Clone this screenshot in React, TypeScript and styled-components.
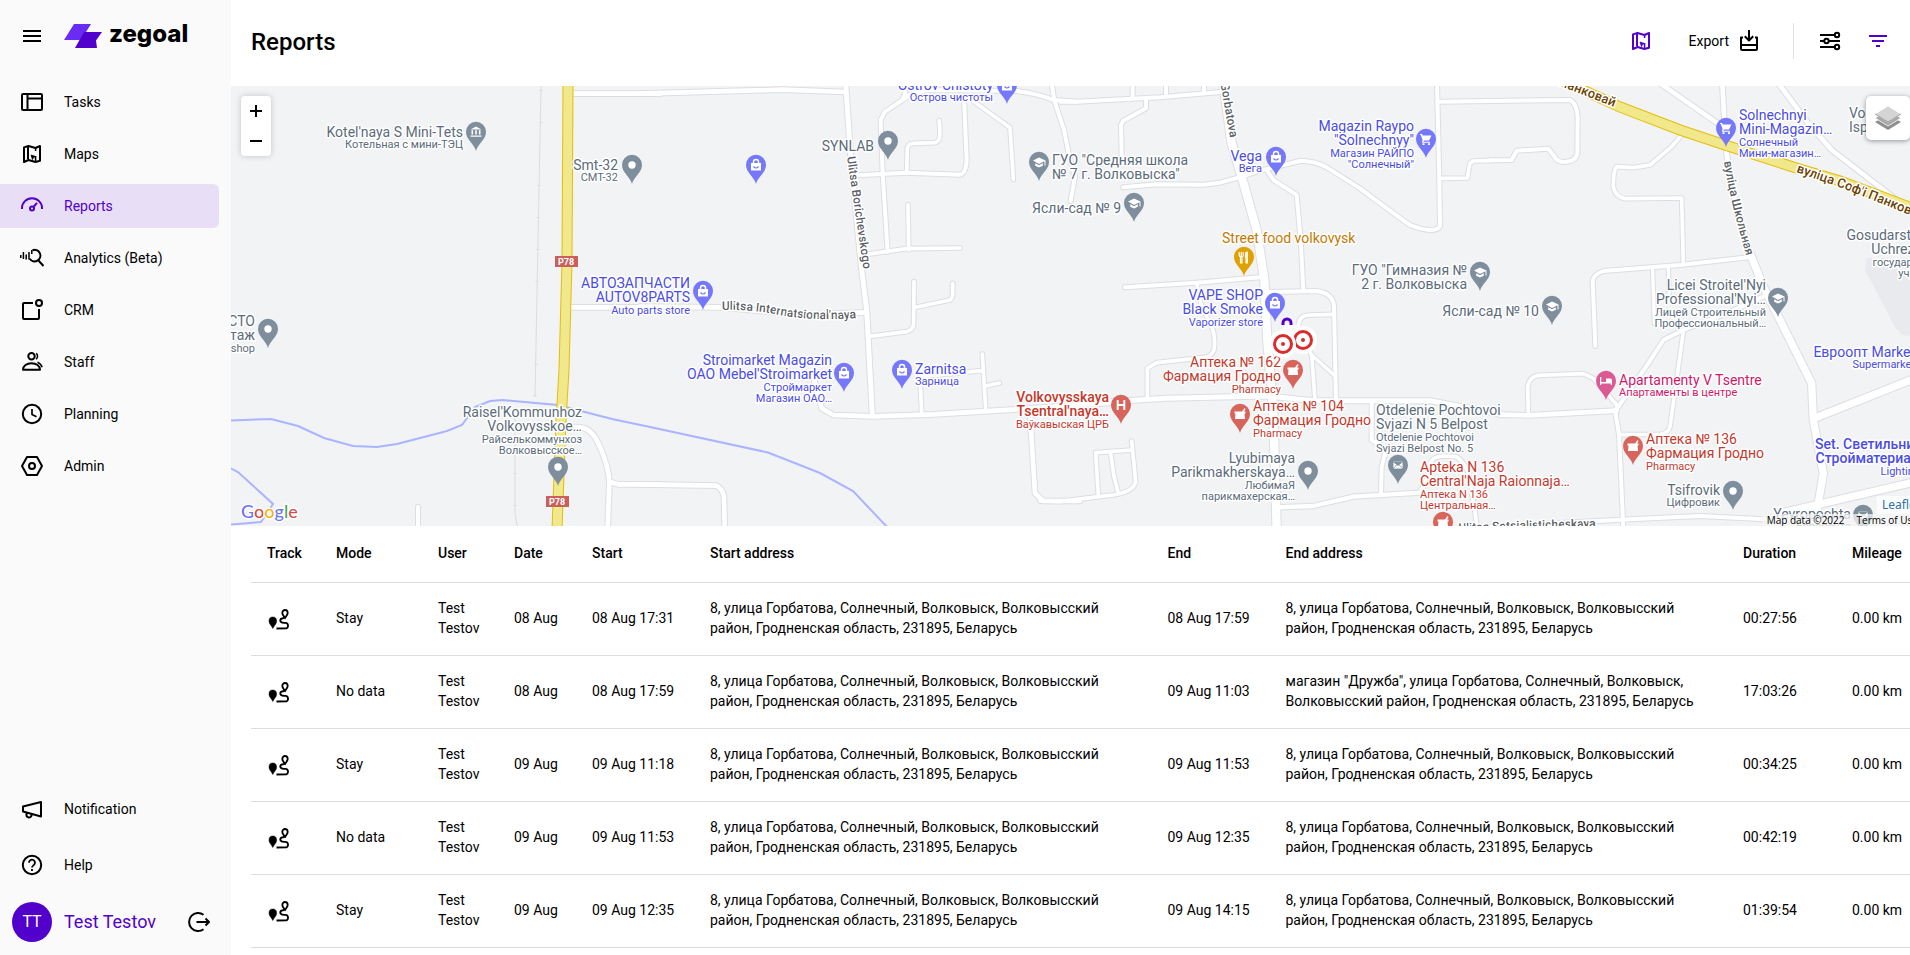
import React from 'react';
import styled, { createGlobalStyle, css } from 'styled-components';

const PURPLE = '#5200cc';

const GlobalStyle = createGlobalStyle`
  *, *::before, *::after { box-sizing: border-box; }
  body {
    margin: 0;
    background: #fff;
    color: #000;
    font-family: Roboto, 'Liberation Sans', sans-serif;
    font-size: 14px;
    line-height: 20px;
  }
  button { display: block; font: inherit; color: inherit; background: none; border: 0; padding: 0; cursor: pointer; }
  a { color: inherit; text-decoration: none; }
`;

/* ---------- Icons ---------- */

const IconSvg = styled.svg`
  display: block;
  flex: none;
  width: 24px;
  height: 24px;
  fill: none;
  stroke: currentColor;
  stroke-width: 2;
  stroke-linejoin: round;
`;

type IconProps = { children: React.ReactNode };
const Icon = ({ children }: IconProps) => (
  <IconSvg viewBox="0 0 24 24" aria-hidden="true">{children}</IconSvg>
);

const MenuIcon = () => <Icon><path d="M3 7h18M3 12h18M3 17h18" /></Icon>;
const TasksIcon = () => (
  <Icon><rect x="2" y="4" width="20" height="16" rx="1" /><path d="M7.5 4v16M7.5 8.5H22" /></Icon>
);
const MapIcon = () => (
  <Icon>
    <path d="M4 5.400 8.500 4l7 2L20 4v14.800L15.500 20l-7-2L4 20z" />
    <path d="M8 4v13" />
    <path d="M15.600 14v6M15.600 6v3" strokeWidth="1.500" />
    <path d="M11 13l4.500 1.500-2 1-1 2z" fill="currentColor" strokeWidth=".8" />
  </Icon>
);
const GaugeIcon = () => (
  <Icon>
    <path d="M2 15v-1a10 9.700 0 0 1 20 0v1" />
    <circle cx="12" cy="14.500" r="2" />
    <path d="M13.500 13 17 8.800" />
  </Icon>
);
const AnalyticsIcon = () => (
  <Icon>
    <path d="M.8 9v3M3.400 6v7M6.200 8.500v5M9 6v7.500M11.800 4v4" strokeWidth="1.500" />
    <path d="M12.500 4.200a5.800 5.800 0 1 1-2.800 8.600M18 14l5.500 6" />
  </Icon>
);
const CrmIcon = () => (
  <Icon><path d="M13 5H4a1 1 0 0 0-1 1v14a1 1 0 0 0 1 1h14a1 1 0 0 0 1-1v-9" /><circle cx="19" cy="5" r="3" /></Icon>
);
const StaffIcon = () => (
  <Icon>
    <circle cx="11.500" cy="6.300" r="3.200" />
    <path d="M3 19.800c0-4 3.800-6.600 8.500-6.600s8.500 2.600 8.500 6.600z" />
    <path d="M16.300 3.200q2.600 3-.2 6M17.500 12.200q3.600 1.600 4.600 5" strokeWidth="1.500" />
  </Icon>
);
const ClockIcon = () => <Icon><circle cx="12" cy="12" r="9.200" /><path d="M12 7v5.500l4.500 2.300" strokeWidth="1.700" /></Icon>;
const AdminIcon = () => <Icon><path d="M7 3h10l5 9-5 9H7l-5-9z" /><circle cx="12" cy="12" r="3" /></Icon>;
const MegaphoneIcon = () => (
  <Icon><path d="M3 9.500 21 5v14.500L3 14.500zM6.500 16v1.500a2.500 2.500 0 0 0 5 .8v-1" /></Icon>
);
const HelpIcon = () => (
  <Icon>
    <circle cx="12" cy="12" r="9.200" />
    <path d="M9 9.800a3 3 0 1 1 4.700 2.300c-1 .8-1.700 1.200-1.700 2.400M12 16v2" strokeWidth="1.800" />
  </Icon>
);
const LogoutIcon = () => (
  <Icon><path d="M16.500 4.800a9 9 0 1 0 0 14.400M9.500 12H22M18.500 8.500 22 12l-3.500 3.500" /></Icon>
);
const ExportIcon = () => (
  <Icon>
    <path d="M12 1v10M7.800 7.300 12 11.500l4.200-4.200" />
    <path d="M6 8.500H4V20a1 1 0 0 0 1 1h14a1 1 0 0 0 1-1V8.500h-2M4 16h16" />
  </Icon>
);
const SlidersIcon = () => (
  <Icon>
    <path d="M2 6h15M2 12h4M11 12h11M2 18h15" />
    <circle cx="19" cy="6" r="2.200" /><circle cx="8.500" cy="12" r="2.200" /><circle cx="19" cy="18" r="2.200" />
  </Icon>
);
const FilterIcon = () => <Icon><path d="M3 7h18M6 12h12M10 17h4" /></Icon>;
const TrackIcon = () => (
  <Icon>
    <path d="M5.800 22.500C4.500 19.500 2 18 2 15.200a3.800 4.200 0 0 1 7.600 0c0 2.800-2.500 4.300-3.800 7.300z" fill="currentColor" strokeWidth=".5" />
    <path d="M18 12.200c-.7-1.700-2.700-3.500-2.700-5.300a2.700 2.900 0 0 1 5.400 0c0 1.800-2 3.600-2.700 5.300zM17 12c-5 .5-5 4.600 0 4.800h1.500c3 0 3.300 4.500 1 5.500l-10 .2" strokeWidth="1.800" />
  </Icon>
);

/* ---------- Sidebar ---------- */

const Shell = styled.div`
  display: flex;
  height: 100vh;
  overflow: hidden;
`;

const Sidebar = styled.aside`
  display: flex;
  flex-direction: column;
  flex: none;
  width: 231px;
  background: #fafafa;
`;

const Brand = styled.div`
  display: flex;
  align-items: center;
  gap: 20px;
  height: 80px;
  padding: 0 20px 8px;
`;

const Logo = styled.a`
  display: flex;
  align-items: center;
  gap: 7px;
  font: 800 24px/32px Inter, sans-serif;
`;

const LogoMark = styled.svg`
  display: block;
  width: 38px;
  height: 24px;
`;

const LogoText = styled.span`
  padding-bottom: 4px;
`;

const NavList = styled.nav`
  display: flex;
  flex-direction: column;
  gap: 8px;
`;

const BottomNav = styled(NavList)`
  gap: 12px;
  margin: auto 0 2px;
`;

const NavItem = styled.a<{ $active?: boolean }>`
  display: flex;
  align-items: center;
  gap: 20px;
  height: 44px;
  margin-right: 12px;
  padding-left: 20px;
  border-radius: 0 6px 6px 0;
  ${({ $active }) => $active && css`
    color: ${PURPLE};
    background: #e8dff6;
  `}
`;

const UserBar = styled.div`
  display: flex;
  align-items: center;
  height: 66px;
  padding: 0 20px 0 12px;
`;

const Avatar = styled.span`
  display: grid;
  place-items: center;
  width: 40px;
  height: 40px;
  margin-right: 12px;
  border-radius: 50%;
  background: ${PURPLE};
  color: #fff;
  font-size: 16px;
`;

const UserName = styled.a`
  flex: 1;
  color: ${PURPLE};
  font-size: 18px;
`;

/* ---------- Header ---------- */

const Main = styled.main`
  flex: none;
  width: calc(100% - 221px);
  min-width: 0;
`;

const Header = styled.header`
  display: flex;
  align-items: center;
  height: 86px;
  padding: 0 30px 4px 20px;
`;

const Title = styled.h1`
  flex: 1;
  margin: 0;
  padding-top: 2px;
  font-size: 24px;
  font-weight: 500;
  line-height: 32px;
`;

const Tool = styled.button<{ $accent?: boolean }>`
  display: flex;
  align-items: center;
  gap: 8px;
  color: ${({ $accent }) => ($accent ? PURPLE : '#000')};
`;

const ExportTool = styled(Tool)`
  padding-left: 4px;
`;

const Tools = styled.div`
  display: flex;
  align-items: center;
  gap: 32px;
`;

const ToolPair = styled.div`
  display: flex;
  gap: 24px;
  padding: 6px 0 6px 24px;
  border-left: 1px solid #e0e0e0;
`;

/* ---------- Map ---------- */

const MapPanel = styled.section`
  position: relative;
  height: 440px;
  overflow: hidden;
  background: #f1f3f4;
`;

const MapCanvas = styled.svg`
  display: block;
  width: 100%;
  height: 100%;
  font-family: Roboto, sans-serif;
`;

const MainText = styled.text<{ $bold?: boolean }>`
  font-size: 14px;
  font-weight: ${({ $bold }) => ($bold ? 500 : 400)};
  paint-order: stroke;
  stroke: #fff;
  stroke-width: 3px;
  stroke-linejoin: round;
`;

const SubText = styled(MainText)`
  font-size: 11px;
  font-weight: 400;
`;

const RoadText = styled(MainText)<{ $highway?: boolean }>`
  font-size: ${({ $highway }) => ($highway ? '13px' : '12px')};
  fill: ${({ $highway }) => ($highway ? '#6b4100' : '#5b6066')};
`;

const ShieldText = styled.text`
  font-size: 9px;
  font-weight: 700;
  fill: #fff;
`;

const GoogleText = styled(MainText)`
  font-family: Lato, sans-serif;
  font-size: 18px;
`;

const ZoomControl = styled.div`
  position: absolute;
  top: 10px;
  left: 10px;
  display: flex;
  flex-direction: column;
  width: 30px;
  border-radius: 4px;
  background: #fff;
  box-shadow: 0 0 6px rgba(0, 0, 0, 0.2);
`;

const ZoomButton = styled.button`
  display: grid;
  place-items: center;
  height: 30px;
`;

const LayersButton = styled.button`
  position: absolute;
  top: 10px;
  right: 10px;
  display: grid;
  place-items: center;
  width: 44px;
  height: 44px;
  border-radius: 5px;
  background: #fff;
  box-shadow: 0 1px 5px rgba(0, 0, 0, 0.4);
`;

const Credits = styled.div`
  position: absolute;
  right: 0;
  bottom: 0;
  display: flex;
  flex-direction: column;
  align-items: flex-end;
  font: 10px/12px 'Open Sans', sans-serif;
`;

const Attribution = styled.a`
  padding-left: 5px;
  background: rgba(255, 255, 255, 0.7);
  color: #2f6fa8;
  font: 12px/18px 'Noto Sans', sans-serif;
`;

const MapTerms = styled.div`
  display: flex;
  gap: 12px;
  padding: 0 2px 0 5px;
  background: rgba(245, 245, 245, 0.75);
`;

/* Street geometry, cut in tiles: each has its origin in map units and holds
   paths at three times that scale, as [stroke width, path]. */
type Road = [number, string];
type Tile = { x: number; y: number; roads: Road[] };

const TILES: Tile[] = [
  {
    x: 230, y: 80, roads: [
      [14, 'M1030 41H1290'],
      [14, 'M1015 682H1290'],
      [14, 'M1005 1040L1050 1042Q1085 1045 1105 1090Q1138 1160 1138 1210L1133 1345'],
      [14, 'M1138 1205L1165 1213L1290 1213'],
      [12, 'M564 1280V1345'],
    ],
  },
  {
    x: 640, y: 80, roads: [
      [14, 'M0 41L430 29L615 36'],
      [15, 'M617 10L632 230L665 570L680 690L697 1005'],
      [14, 'M0 680L245 682Q400 695 470 705L680 697'],
      [12, 'M795 18V50M810 45L735 95L722 120L728 280L743 515'],
      [12, 'M790 50L860 30L1130 33Q1190 40 1240 60L1310 65'],
      [12, 'M655 286L725 282L800 278L960 284Q978 280 980 240L972 50'],
      [11, 'M800 280L802 205Q805 190 820 190L885 188Q900 185 900 160L898 122'],
      [11, 'M995 60L1110 143L1120 298'],
      [11, 'M804 374L806 510M680 523L800 506L960 504'],
      [11, 'M690 769L800 755Q820 750 821 730L822 605M828 682L930 660Q938 655 938 640V610'],
      [14, 'M520 890L545 985L580 1005L700 1009L880 1003L1130 988L1420 968'],
      [11, 'M845 1000L840 890Q860 888 1025 872M1027 822L1037 985M1037 918L1078 909'],
      [14, 'M1170 1000L1185 1240L1210 1263L1320 1263'],
      [14, 'M0 1213L230 1217Q248 1228 252 1250L254 1345'],
    ],
  },
  {
    x: 1060, y: 80, roads: [
      [12, 'M0 65L50 65L300 52L490 35M218 10V55M318 10V50M432 10V40'],
      [12, 'M258 60L258 85L190 122L183 135L185 225'],
      [12, 'M-25 10L-17 62L12 150L28 230L45 290L32 363'],
      [25, 'M490 10L515 190L545 290L590 450L613 600L622 780L640 1000L650 1345'],
      [12, 'M190 322L290 313L430 314L480 308L545 290L600 272L720 243Q760 240 800 262L900 325Q1000 400 1050 435Q1080 448 1110 450Q1140 450 1140 435L1138 300L1131 10'],
      [11, 'M1145 295L1222 294L1230 250L1240 243L1300 241'],
      [12, 'M620 270L640 300L710 345L722 480L730 630'],
      [12, 'M625 636L770 633Q820 640 822 680L828 960'],
      [11, 'M715 760V740Q715 705 750 705L822 703M735 790L755 825L765 960M755 825L822 885'],
      [12, 'M195 622L410 608L600 592'],
      [11, 'M410 610L425 680L455 740Q468 770 462 810Q455 830 430 833L290 848L262 865L262 955'],
      [15, 'M150 965L320 955L620 948L760 962L1110 962L1325 1003'],
      [12, 'M935 970L935 1080L978 1110L965 1160L963 1240'],
      [13, 'M650 1282L760 1278L880 1250L1080 1238L1110 1180'],
      [11, 'M1110 1190V1150Q1120 1128 1150 1128L1190 1130Q1220 1150 1230 1200L1250 1330'],
      [11, 'M215 1083L227 1205Q222 1235 160 1245L115 1250L0 1265L-60 1263M115 1245L107 1118L215 1110M152 1120L162 1190L175 1240'],
    ],
  },
  {
    x: 1480, y: 80, roads: [
      [12, 'M-125 65L270 60Q290 70 293 110L292 220Q288 245 250 246Q230 244 222 228L205 206L110 212L95 240L30 241'],
      [14, 'M540 10L735 145M895 10L985 130L1055 210L1250 360'],
      [14, 'M727 10L738 210L760 340L810 520'],
      [22, 'M810 520L850 620L920 760L995 910L1000 1020L1030 1180L1010 1300'],
      [11, 'M605 165L575 200L510 255L460 263L410 260Q400 270 400 320Q405 350 435 356L605 354L610 550'],
      [12, 'M820 530L600 555L370 573Q338 585 338 605L346 798'],
      [10, 'M518 570L523 730M565 565L567 640'],
      [12, 'M850 650L740 700L610 750L550 780L505 850L415 980'],
      [12, 'M415 980L405 990L417 1064L430 1345'],
      [11, 'M610 755L570 1040Q565 1060 540 1063L425 1064'],
      [11, 'M145 1003L143 920Q148 890 175 886L310 881L340 895L415 980'],
      [14, 'M60 1004L145 1006L410 992'],
      [22, 'M1010 1012L1330 885M900 1300L1330 1200'],
      [12, 'M-60 1345L450 1318L660 1308L900 1320'],
    ],
  },
];

type PinKind = 'dot' | 'bag' | 'cap' | 'cart' | 'mail' | 'museum' | 'hospital' | 'pharmacy' | 'food' | 'bed';
type Tone = 'grey' | 'blue' | 'red' | 'amber' | 'pink';

const TONES: Record<Tone, { pin: string; text: string }> = {
  grey: { pin: '#7f8e9c', text: '#5c6c7b' },
  blue: { pin: '#7678fb', text: '#4a4ce8' },
  red: { pin: '#d8655c', text: '#c5392d' },
  amber: { pin: '#dfa202', text: '#c17a02' },
  pink: { pin: '#dc5a94', text: '#d0176b' },
};

const GLYPHS: Record<PinKind, React.ReactNode> = {
  dot: <circle r="3.700" fill="#fff" />,
  bag: (
    <>
      <path d="M-5-2H5V5.500H-5z" fill="#fff" />
      <path d="M-2.500-1.500V-3a2.500 2.500 0 0 1 5 0v1.500" fill="none" stroke="#fff" strokeWidth="1.500" />
      <path d="M-2.500 1.500q2.500 3 5 0" fill="none" stroke="#7678fb" strokeWidth="1.200" />
    </>
  ),
  cap: <path d="M-6-1.500 0-4.500 6.500-1.500V3.500H5.500V-.8L0 2-6-1.500zM-3.800 1.200 0 3.200l3.800-2V3.700L0 5.500-3.800 3.700z" fill="#fff" />,
  cart: <path d="M-6-5h2l.8 1.500H5.500L3 1.500H-2L-2.500 2.700H4V3.800H-4L-3.500.8-5.200-4H-6zM-3.500 4.300h2v1.800h-2zM2 4.300h2v1.800H2z" fill="#fff" />,
  mail: <path d="M-5-4H5V4H-5zM-5-3.500 0 .5l5-4M-5 4-1-.5M5 4 1-.5" fill="#fff" stroke="#7f8e9c" strokeWidth=".8" />,
  museum: <path d="M-5.500-2.500 0-5.500l5.500 3zM-4.500-1.800h1.600V2.500h-1.600zM-.8-1.800H.8V2.500H-.8zM2.900-1.800h1.600V2.500H2.900zM-5.500 3.500h11v1.300h-11z" fill="#fff" />,
  hospital: <path d="M-3.300-5V5M3.300-5V5M-3.300 0H3.300" stroke="#fff" strokeWidth="2" />,
  pharmacy: <path d="M-5.500-2.500H2L4.500-6 5.500-5 4-2.500h1.500V-.5H4.500L5 5H-5l.5-5.500h-1z" fill="#fff" />,
  food: <path d="M-4.800-5V-1.500q0 1 1.300 1.300V6h1.500V-.2Q-.8-.5-.8-1.500V-5M-2.800-5V0M2-5v11h1.300V-5Q1.500-5 1.500-2V1" fill="none" stroke="#fff" strokeWidth="1.200" />,
  bed: <path d="M-6-4h1.300v5H0V-2.500h4.500Q6-2.500 6-1v5H4.700V2.500H-4.700V4H-6z" fill="#fff" />,
};

type PinProps = { x: number; y: number; kind: PinKind; tone: Tone };
const Pin = ({ x, y, kind, tone }: PinProps) => (
  <g transform={`translate(${x} ${y})`}>
    <path d="M0 19C-1.500 12-10 8-10-.2a10 10 0 0 1 20 0C10 8 1.500 12 0 19z" fill={TONES[tone].pin} />
    {GLYPHS[kind]}
  </g>
);

type Place = {
  x: number; y: number; side?: 'start' | 'end'; tone: Tone; bold?: boolean;
  main: string[]; sub?: string[]; pin?: [number, number, PinKind];
};

const PLACES: Place[] = [
  { x: 463, y: 137, tone: 'grey', main: ["Kotel'naya S Mini-Tets"], sub: ['Котельная с мини-ТЭЦ'], pin: [476, 132, 'museum'] },
  { x: 618, y: 170, tone: 'grey', main: ['Smt-32'], sub: ['СМТ-32'], pin: [632, 165, 'dot'] },
  { x: 255, y: 326, tone: 'grey', main: ['СТО', 'таж'], sub: ['shop'], pin: [268, 329, 'dot'] },
  { x: 582, y: 417, tone: 'grey', main: ["Raisel'Kommunhoz", 'Volkovysskoe…'], sub: ['Райселькоммунхоз', 'Волковысское…'], pin: [558, 467, 'dot'] },
  { x: 690, y: 288, tone: 'blue', main: ['АВТОЗАПЧАСТИ', 'AUTOV8PARTS'], sub: ['Auto parts store'], pin: [703, 291, 'bag'] },
  { x: 756, y: 165, tone: 'blue', main: [], pin: [756, 165, 'bag'] },
  { x: 874, y: 151, tone: 'grey', main: ['SYNLAB'], pin: [888, 141, 'dot'] },
  { x: 993, y: 90, tone: 'blue', main: ['Ostrov Chistoty'], sub: ['Остров чистоты'], pin: [1007, 85, 'bag'] },
  { x: 832, y: 365, tone: 'blue', main: ['Stroimarket Magazin', "ОАО Mebel'Stroimarket"], sub: ['Строймаркет', 'Магазин ОАО…'], pin: [844, 373, 'bag'] },
  { x: 915, y: 374, side: 'start', tone: 'blue', main: ['Zarnitsa'], sub: ['Зарница'], pin: [902, 370, 'bag'] },
  { x: 1052, y: 165, side: 'start', tone: 'grey', main: ['ГУО "Средняя школа', '№ 7 г. Волковыска"'], pin: [1039, 162, 'cap'] },
  { x: 1121, y: 213, tone: 'grey', main: ['Ясли-сад № 9'], pin: [1134, 203, 'cap'] },
  { x: 1109, y: 402, tone: 'red', bold: true, main: ['Volkovysskaya', "Tsentral'naya…"], sub: ['Ваўкавыская ЦРБ'], pin: [1121, 405, 'hospital'] },
  { x: 1262, y: 161, tone: 'blue', main: ['Vega'], sub: ['Вега'], pin: [1276, 157, 'bag'] },
  { x: 1414, y: 131, tone: 'blue', main: ['Magazin Raypo', '"Solnechnyy"'], sub: ['Магазин РАЙПО', '"Солнечный"'], pin: [1426, 139, 'cart'] },
  { x: 1222, y: 243, side: 'start', tone: 'amber', main: ['Street food volkovysk'], pin: [1244, 257, 'food'] },
  { x: 1263, y: 300, tone: 'blue', main: ['VAPE SHOP', 'Black Smoke'], sub: ['Vaporizer store'], pin: [1275, 303, 'bag'] },
  { x: 1281, y: 367, tone: 'red', main: ['Аптека № 162', 'Фармация Гродно'], sub: ['Pharmacy'], pin: [1293, 370, 'pharmacy'] },
  { x: 1253, y: 411, side: 'start', tone: 'red', main: ['Аптека № 104', 'Фармация Гродно'], sub: ['Pharmacy'], pin: [1240, 414, 'pharmacy'] },
  { x: 1295, y: 463, tone: 'grey', main: ['Lyubimaya', 'Parikmakherskaya…'], sub: ['ЛюбимаЯ', 'парикмахерская…'], pin: [1308, 471, 'dot'] },
  { x: 1467, y: 275, tone: 'grey', main: ['ГУО "Гимназия №', '2 г. Волковыска'], pin: [1480, 272, 'cap'] },
  { x: 1376, y: 415, side: 'start', tone: 'grey', main: ['Otdelenie Pochtovoi', 'Svjazi N 5 Belpost'], sub: ['Otdelenie Pochtovoi', 'Svjazi Belpost No. 5'], pin: [1398, 465, 'mail'] },
  { x: 1420, y: 472, side: 'start', tone: 'red', main: ['Apteka N 136', "Central'Naja Raionnaja…"], sub: ['Аптека N 136', 'Центральная…'], pin: [1443, 522, 'pharmacy'] },
  { x: 1539, y: 316, tone: 'grey', main: ['Ясли-сад № 10'], pin: [1552, 306, 'cap'] },
  { x: 1739, y: 120, side: 'start', tone: 'blue', main: ['Solnechnyi', 'Mini-Magazin…'], sub: ['Солнечный', 'Мини-магазин…'], pin: [1726, 128, 'cart'] },
  { x: 1849, y: 118, side: 'start', tone: 'grey', main: ['Vo', 'Isp'] },
  { x: 1956, y: 240, tone: 'grey', main: ['Gosudarstvennoe', 'Uchrezhdenie'], sub: ['государственн…', 'учрежден…'] },
  { x: 1766, y: 290, tone: 'grey', main: ["Licei Stroitel'Nyi", "Professional'Nyi…"], sub: ['Лицей Строительный', 'Профессиональный…'], pin: [1778, 298, 'cap'] },
  { x: 1915, y: 357, tone: 'blue', main: ['Евроопт Market'], sub: ['Supermarket'] },
  { x: 1619, y: 385, side: 'start', tone: 'pink', main: ['Apartamenty V Tsentre'], sub: ['Апартаменты в центре'], pin: [1606, 381, 'bed'] },
  { x: 1646, y: 444, side: 'start', tone: 'red', main: ['Аптека № 136', 'Фармация Гродно'], sub: ['Pharmacy'], pin: [1633, 446, 'pharmacy'] },
  { x: 1930, y: 449, tone: 'blue', bold: true, main: ['Set. Светильники', 'Стройматериалы'], sub: ['Lighting …'] },
  { x: 1720, y: 495, tone: 'grey', main: ['Tsifrovik'], sub: ['Цифровик'], pin: [1733, 491, 'dot'] },
  { x: 1851, y: 519, tone: 'grey', main: ['Yevropochta'], sub: ['Европочта'], pin: [1863, 515, 'mail'] },
];

const PlaceLabel = ({ place }: { place: Place }) => {
  const { x, y, side = 'end', tone, bold, main, sub = [], pin } = place;
  const subTop = y + (main.length - 1) * 14 + (main.length > 1 ? 12 : 11);
  return (
    <g fill={TONES[tone].text} textAnchor={side}>
      {pin && <Pin x={pin[0]} y={pin[1]} kind={pin[2]} tone={tone} />}
      {main.map((line, i) => <MainText key={line} $bold={bold} x={x} y={y + i * 14}>{line}</MainText>)}
      {sub.map((line, i) => <SubText key={line} x={x} y={subTop + i * 11}>{line}</SubText>)}
    </g>
  );
};

const HIGHWAYS = ['M568 84L567 262L564 370L561 420L557 530', 'M1555 78L1583 90L1620 107L1680 130L1728 146L1793 167L1840 181L1880 196L1925 213'];

const STREETS = [
  { id: 'borichevskogo', d: 'M847 157L865 280', name: 'Ulitsa Borichevskogo' },
  { id: 'internatsionalnaya', d: 'M722 310Q750 309 780 315Q815 322 870 317', name: "Ulitsa Internatsional'naya" },
  { id: 'gorbatova', d: 'M1208 20L1221 86L1230 138', name: 'Ulitsa Gorbatova', end: true },
  { id: 'shkolnaya', d: 'M1724 162Q1731 205 1750 268', name: 'вуліца Школьная' },
  { id: 'sotsialisticheskaya', d: 'M1459 532Q1520 529 1610 527', name: 'Ulitsa Sotsialisticheskaya' },
  { id: 'pankovay', d: 'M1796 172L1842 188L1880 203L1960 235', name: "вуліца Соф'і Панковай", highway: true },
  { id: 'pankovay-west', d: 'M1460 50L1550 82L1614 107', name: "вуліца Соф'і Панковай", highway: true, end: true },
];

const CityMap = () => (
  <MapCanvas viewBox="231 86 1689 440" preserveAspectRatio="xMidYMid slice" role="img" aria-label="Map of Volkovysk">
    <path d="M1865 270L1867 258H1925V338L1902 335L1895 327z" fill="#e8eaed" />
    <g fill="none" stroke="#dadce0">
      <path d="M541 86L535 397" />
      <path d="M515 415V513L518 530" />
      <path d="M541 90v1M541 122v1M539 185v1M538 217v1M538 249v1M537 281v1M536 364v1M535 395v1M515 473v1M515 505v1" strokeWidth="3" />
    </g>
    <g fill="none" stroke="#aab4ff" strokeWidth="2">
      <path d="M230 420.500L271 419L298 426L324 438L353 446L377 447L397 444L447 431L462 425L475 407L490 401L503 400L558 405L612 419L650 427L768 452.500L820 473L853 491L888 528" />
      <path d="M230 468L238 472L273 504L261 522L230 524.500" />
    </g>
    {[true, false].map((casing) => (
      <g key={String(casing)} fill="none" strokeLinecap="round" strokeLinejoin="round" stroke={casing ? '#dcdee3' : '#fff'}>
        {TILES.map((tile) => (
          <g key={tile.x} transform={`translate(${tile.x} ${tile.y}) scale(.33333)`}>
            {tile.roads.map(([width, d]) => <path key={d} d={d} strokeWidth={casing ? width + 6 : width} />)}
          </g>
        ))}
      </g>
    ))}
    {HIGHWAYS.map((d) => (
      <g key={d} fill="none">
        <path d={d} stroke="#e5bd0c" strokeWidth="11" />
        <path d={d} stroke="#f1e88b" strokeWidth="9" />
      </g>
    ))}
    {STREETS.map(({ id, d, name, highway, end }) => (
      <React.Fragment key={id}>
        <path id={id} d={d} fill="none" />
        <RoadText $bold $highway={highway} textAnchor={end ? 'end' : 'start'}>
          <textPath href={`#${id}`} startOffset={end ? '100%' : '0'}>{name}</textPath>
        </RoadText>
      </React.Fragment>
    ))}
    {[[555, 256], [546, 496]].map(([x, y]) => (
      <g key={y}>
        <rect x={x} y={y} width="23" height="11" fill="#c9605c" />
        <ShieldText x={x + 3} y={y + 9}>P78</ShieldText>
      </g>
    ))}
    {PLACES.map((place) => <PlaceLabel key={`${place.x}-${place.y}`} place={place} />)}
    <g fill="#fff">
      <circle cx="1283" cy="344" r="14" /><circle cx="1303" cy="340" r="14" /><circle cx="1291" cy="332" r="9" />
    </g>
    <g fill="none" strokeWidth="3">
      <path d="M1283 325v-2a4 4 0 0 1 8 0v2" stroke={PURPLE} />
      <circle cx="1303" cy="340" r="8.500" stroke="#dd2a2a" />
      <circle cx="1283" cy="344" r="11" stroke="#fff" strokeWidth="4" />
      <circle cx="1283" cy="344" r="8.500" stroke="#dd2a2a" />
    </g>
    <circle cx="1303" cy="340" r="2" fill="#dd2a2a" /><circle cx="1283" cy="344" r="2" fill="#dd2a2a" />
    <GoogleText x="241" y="518" $bold>
      <tspan fill="#6a76f5">G</tspan><tspan fill="#d5504a">o</tspan><tspan fill="#e8b80c">o</tspan>
      <tspan fill="#6a76f5">g</tspan><tspan fill="#4aa860">l</tspan><tspan fill="#d5504a">e</tspan>
    </GoogleText>
  </MapCanvas>
);

const MapView = () => (
  <MapPanel>
    <CityMap />
    <ZoomControl>
      <ZoomButton aria-label="Zoom in">
        <svg width="14" height="14"><path d="M7 1v12M1 7h12" stroke="#000" strokeWidth="2" /></svg>
      </ZoomButton>
      <ZoomButton aria-label="Zoom out">
        <svg width="14" height="14"><path d="M1 7h12" stroke="#000" strokeWidth="2" /></svg>
      </ZoomButton>
    </ZoomControl>
    <LayersButton aria-label="Layers">
      <svg width="26" height="26" viewBox="0 0 26 26">
        <path d="M0 17 13 10l13 7-13 8z" fill="#8e8e8e" />
        <path d="M0 13 13 6l13 7-13 8z" fill="#a8a8a8" stroke="#fff" strokeWidth=".8" />
        <path d="M0 9 13 1l13 8-13 8z" fill="#d4d4d4" stroke="#fff" strokeWidth=".8" />
        <path d="M0 9 13 17 26 9" fill="none" stroke="#999" />
      </svg>
    </LayersButton>
    <Credits>
      <Attribution href="#leaflet">Leaflet</Attribution>
      <MapTerms><span>Map data ©2022</span><a href="#terms">Terms of Use</a></MapTerms>
    </Credits>
  </MapPanel>
);

/* ---------- Table ---------- */

const TableWrap = styled.div`
  padding-left: 20px;
`;

const Table = styled.table`
  width: 100%;
  table-layout: fixed;
  border-collapse: separate;
  border-spacing: 0;
`;

const Col = styled.col<{ $width?: number }>`
  width: ${({ $width }) => ($width ? `${$width}px` : 'auto')};
`;

const Th = styled.th`
  height: 57px;
  padding: 0 16px 2px;
  border-bottom: 1px solid #dedede;
  font-weight: 500;
  text-align: left;
  white-space: nowrap;
`;

const Td = styled.td`
  height: 73px;
  padding: 0 16px 2px;
  border-bottom: 1px solid #dedede;
`;

const COLUMNS: { name: string; width?: number }[] = [
  { name: 'Track', width: 69 },
  { name: 'Mode', width: 102 },
  { name: 'User', width: 76 },
  { name: 'Date', width: 78 },
  { name: 'Start', width: 118 },
  { name: 'Start address' },
  { name: 'End', width: 118 },
  { name: 'End address' },
  { name: 'Duration', width: 109 },
  { name: 'Mileage', width: 84 },
];

const HOME = '8, улица Горбатова, Солнечный, Волковыск, Волковысский район, Гродненская область, 231895, Беларусь';
const SHOP = 'магазин "Дружба", улица Горбатова, Солнечный, Волковыск, Волковысский район, Гродненская область, 231895, Беларусь';

const ROWS = [
  ['Stay', 'Test Testov', '08 Aug', '08 Aug 17:31', HOME, '08 Aug 17:59', HOME, '00:27:56', '0.00 km'],
  ['No data', 'Test Testov', '08 Aug', '08 Aug 17:59', HOME, '09 Aug 11:03', SHOP, '17:03:26', '0.00 km'],
  ['Stay', 'Test Testov', '09 Aug', '09 Aug 11:18', HOME, '09 Aug 11:53', HOME, '00:34:25', '0.00 km'],
  ['No data', 'Test Testov', '09 Aug', '09 Aug 11:53', HOME, '09 Aug 12:35', HOME, '00:42:19', '0.00 km'],
  ['Stay', 'Test Testov', '09 Aug', '09 Aug 12:35', HOME, '09 Aug 14:15', HOME, '01:39:54', '0.00 km'],
];

const ReportTable = () => (
  <TableWrap>
    <Table>
      <colgroup>{COLUMNS.map((c) => <Col key={c.name} $width={c.width} />)}</colgroup>
      <thead>
        <tr>{COLUMNS.map((c) => <Th key={c.name} scope="col">{c.name}</Th>)}</tr>
      </thead>
      <tbody>
        {ROWS.map((row) => (
          <tr key={row[3]}>
            <Td><button aria-label="Show track"><TrackIcon /></button></Td>
            {row.map((cell, i) => <Td key={i}>{cell}</Td>)}
          </tr>
        ))}
      </tbody>
    </Table>
  </TableWrap>
);

/* ---------- Page ---------- */

const NAV = [
  { label: 'Tasks', icon: <TasksIcon /> },
  { label: 'Maps', icon: <MapIcon /> },
  { label: 'Reports', icon: <GaugeIcon />, active: true },
  { label: 'Analytics (Beta)', icon: <AnalyticsIcon /> },
  { label: 'CRM', icon: <CrmIcon /> },
  { label: 'Staff', icon: <StaffIcon /> },
  { label: 'Planning', icon: <ClockIcon /> },
  { label: 'Admin', icon: <AdminIcon /> },
];

export default function App() {
  return (
    <Shell>
      <GlobalStyle />
      <Sidebar>
        <Brand>
          <button aria-label="Menu"><MenuIcon /></button>
          <Logo href="#home">
            <LogoMark viewBox="0 0 38 24" aria-hidden="true">
              <path d="M10 0H27L17 16H0z" fill="#6a2cf5" />
              <path d="M20 8H38L32 16.500 33 24H11z" fill={PURPLE} />
            </LogoMark>
            <LogoText>zegoal</LogoText>
          </Logo>
        </Brand>
        <NavList>
          {NAV.map(({ label, icon, active }) => (
            <NavItem key={label} href={`#${label}`} $active={active}>{icon}{label}</NavItem>
          ))}
        </NavList>
        <BottomNav>
          <NavItem href="#notification"><MegaphoneIcon />Notification</NavItem>
          <NavItem href="#help"><HelpIcon />Help</NavItem>
        </BottomNav>
        <UserBar>
          <Avatar>TT</Avatar>
          <UserName href="#profile">Test Testov</UserName>
          <button aria-label="Log out"><LogoutIcon /></button>
        </UserBar>
      </Sidebar>
      <Main>
        <Header>
          <Title>Reports</Title>
          <Tools>
            <Tool $accent aria-label="Map"><MapIcon /></Tool>
            <ExportTool>Export<ExportIcon /></ExportTool>
            <ToolPair>
              <Tool aria-label="Settings"><SlidersIcon /></Tool>
              <Tool $accent aria-label="Filter"><FilterIcon /></Tool>
            </ToolPair>
          </Tools>
        </Header>
        <MapView />
        <ReportTable />
      </Main>
    </Shell>
  );
}
